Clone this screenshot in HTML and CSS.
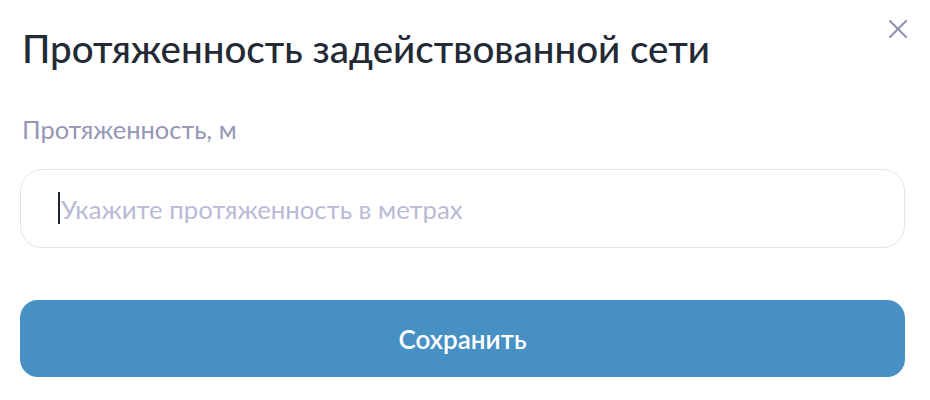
FILE: index.html
```html
<!DOCTYPE html>
<html lang="ru">
<head>
<meta charset="utf-8">
<link rel="stylesheet" href="styles.css">
</head>
<body>
<div class="modal">
  <button class="close" aria-label="Закрыть">
    <svg width="18" height="18" viewBox="0 0 18 18"><path d="M1 1 L17 17 M17 1 L1 17" stroke="#8e90b0" stroke-width="2" stroke-linecap="round" fill="none"/></svg>
  </button>
  <h1 class="title">Протяженность задействованной сети</h1>
  <label class="label" for="len">Протяженность, м</label>
  <div class="field">
    <span class="caret"></span>
    <input id="len" class="input" type="text" placeholder="Укажите протяженность в метрах">
  </div>
  <button class="save">Сохранить</button>
</div>
</body>
</html>
```
FILE: styles.css
```css
html, body { margin: 0; padding: 0; background: #fff; }
body { font-family: Lato, "Noto Sans", sans-serif; width: 930px; height: 400px; overflow: hidden; }
.modal { position: relative; padding: 25px 25px 0 20px; display: flex; flex-direction: column; }
.close { position: absolute; top: 20px; right: 23px; width: 18px; height: 18px; padding: 0; border: 0; background: none; display: flex; }
.title { margin: 0 0 0 2px; font-size: 38.5px; font-weight: 500; color: #232a36; line-height: 46px; }
.label { margin: 43px 0 0 2px; font-size: 25.4px; font-weight: 400; color: #9597b4; line-height: 31px; }
.field { position: relative; margin-top: 24px; height: 79px; box-sizing: border-box; border: 1px solid #dbe8ef; border-radius: 22px; display: flex; align-items: center; padding-left: 40px; }
.caret { position: absolute; left: 37px; top: 22px; width: 2px; height: 32px; background: #1f2633; }
.input { border: 0; outline: none; background: transparent; font-family: Lato, sans-serif; font-size: 25.75px; color: #232a36; width: 100%; padding: 0; }
.input::placeholder { color: #b9bad6; }
.save { margin-top: 52px; height: 77px; border: 0; border-radius: 18px; background: #4790c4; color: #fff; font-family: Lato, sans-serif; font-size: 26px; font-weight: 600; }
```
